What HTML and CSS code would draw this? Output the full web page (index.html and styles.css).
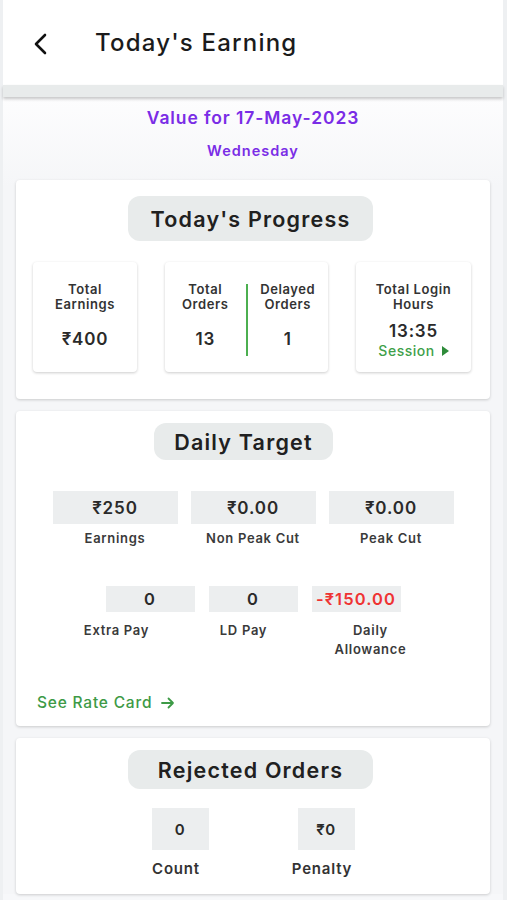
FILE: index.html
```html
<!DOCTYPE html>
<html lang="en">
<head>
<meta charset="utf-8">
<title>Today's Earning</title>
<link rel="stylesheet" href="styles.css">
</head>
<body>
<div class="app">
  <header class="topbar">
    <svg class="back" width="16" height="22" viewBox="0 0 16 22" aria-hidden="true"><path d="M13 2 L4 11 L13 20" fill="none" stroke="#111" stroke-width="2.6" stroke-linecap="round" stroke-linejoin="round"/></svg>
    <h1 class="title">Today's Earning</h1>
  </header>
  <div class="band"></div>
  <main class="content">
    <div class="date">Value for 17-May-2023</div>
    <div class="day">Wednesday</div>

    <section class="card progress">
      <div class="pill-row"><div class="pill pill-lg">Today's Progress</div></div>
      <div class="stats">
        <div class="stat stat-a">
          <div class="stat-label">Total<br>Earnings</div>
          <div class="stat-value">₹400</div>
        </div>
        <div class="stat stat-b">
          <div class="col">
            <div class="stat-label">Total<br>Orders</div>
            <div class="stat-value">13</div>
          </div>
          <div class="divider"></div>
          <div class="col">
            <div class="stat-label">Delayed<br>Orders</div>
            <div class="stat-value">1</div>
          </div>
        </div>
        <div class="stat stat-c">
          <div class="stat-label">Total Login<br>Hours</div>
          <div class="stat-time">13:35</div>
          <div class="session">Session <span class="tri"></span></div>
        </div>
      </div>
    </section>

    <section class="card target">
      <div class="pill-row pill-row-shift"><div class="pill pill-md">Daily Target</div></div>
      <div class="row1">
        <div class="item"><div class="vbox">₹250</div><div class="lbl">Earnings</div></div>
        <div class="item"><div class="vbox">₹0.00</div><div class="lbl">Non Peak Cut</div></div>
        <div class="item"><div class="vbox">₹0.00</div><div class="lbl">Peak Cut</div></div>
      </div>
      <div class="row2-boxes">
        <div class="vbox vbox-sm">0</div>
        <div class="vbox vbox-sm">0</div>
        <div class="vbox vbox-sm neg">-₹150.00</div>
      </div>
      <div class="row2-labels">
        <div class="lbl2">Extra Pay</div>
        <div class="lbl2">LD Pay</div>
        <div class="lbl2">Daily<br>Allowance</div>
      </div>
      <div class="rate">See Rate Card <svg class="arrow" width="14" height="12" viewBox="0 0 14 12" aria-hidden="true"><path d="M1 6 H12 M7.5 1.5 L12 6 L7.5 10.5" fill="none" stroke="#3d9a46" stroke-width="1.8" stroke-linecap="round" stroke-linejoin="round"/></svg></div>
    </section>

    <section class="card rejected">
      <div class="pill-row"><div class="pill pill-rj">Rejected Orders</div></div>
      <div class="rj-row">
        <div class="rj-item"><div class="rj-box">0</div><div class="rj-lbl">Count</div></div>
        <div class="rj-item"><div class="rj-box">₹0</div><div class="rj-lbl">Penalty</div></div>
      </div>
    </section>
  </main>
</div>
</body>
</html>
```

FILE: styles.css
```css
* { box-sizing: border-box; }
html, body { margin: 0; padding: 0; }
body {
  background: #eef0f2;
  font-family: "Inter", "Noto Sans", "DejaVu Sans", sans-serif;
  color: #2b2b2b;
}
.app {
  margin: 0 4px 0 3px;
  min-height: 900px;
  background: #f7f8fa;
}
.topbar {
  height: 85px;
  background: #ffffff;
  display: flex;
  align-items: center;
  padding-left: 29px;
}
.back { display: block; margin-top: 2px; }
.title {
  margin: 0 0 0 47px;
  font-size: 24px;
  font-weight: 500;
  color: #1b1b1b;
  letter-spacing: 1.2px;
}
.band {
  height: 12px;
  background: #e8ebeb;
  box-shadow: 0 2px 3px rgba(0,0,0,0.22);
  position: relative;
}
.content {
  padding: 10px 13px 0 13px;
  background: linear-gradient(#fdfdfe, #f5f6f8 90px);
}
.date {
  text-align: center;
  color: #7a2de6;
  font-size: 17.5px;
  line-height: 22px;
  font-weight: 600;
  letter-spacing: 0.9px;
}
.day {
  margin-top: 13px;
  text-align: center;
  color: #7a2de6;
  font-size: 14.5px;
  line-height: 18px;
  font-weight: 600;
  letter-spacing: 1px;
}
.card {
  background: #ffffff;
  border-radius: 4px;
  box-shadow: 0 1px 3px rgba(0,0,0,0.18);
}
.progress { margin-top: 20px; padding: 16px 0 27px 0; }
.target { margin-top: 12px; padding: 12px 0 13px 0; }
.rejected { margin-top: 12px; padding: 12px 0 15px 0; }

.pill-row { display: flex; justify-content: center; padding-right: 5px; }
.pill-row-shift { padding-right: 19px; }
.pill {
  background: #e8ebeb;
  border-radius: 12px;
  display: flex;
  align-items: center;
  justify-content: center;
  font-weight: 600;
  font-size: 21.5px;
  letter-spacing: 1.2px;
  color: #202020;
}
.pill-lg { width: 245px; height: 45px; }
.pill-md { width: 179px; height: 37px; }
.pill-rj { width: 245px; height: 39px; }

.stats {
  display: flex;
  gap: 28px;
  margin-top: 21px;
  padding-left: 17px;
}
.stat {
  height: 110px;
  background: #ffffff;
  border-radius: 4px;
  box-shadow: 0 1px 3px rgba(0,0,0,0.2);
  text-align: center;
  padding-top: 20px;
}
.stat-a { width: 104px; }
.stat-b { width: 163px; display: flex; padding-top: 0; }
.stat-c { width: 115px; }
.stat-b .col { flex: 1; padding-top: 20px; }
.stat-label {
  font-size: 13px;
  line-height: 15px;
  font-weight: 600;
  color: #333;
  letter-spacing: 0.6px;
}
.stat-value {
  margin-top: 16px;
  font-size: 17px;
  line-height: 22px;
  font-weight: 600;
  color: #2a2a2a;
  letter-spacing: 0.8px;
}
.divider {
  width: 2px;
  height: 72px;
  margin-top: 22px;
  background: #4caf50;
}
.stat-time {
  margin-top: 9px;
  font-size: 17px;
  line-height: 20px;
  font-weight: 600;
  color: #2a2a2a;
  letter-spacing: 0.8px;
}
.session {
  margin-top: 1px;
  font-size: 14px;
  line-height: 18px;
  font-weight: 500;
  color: #3f9f4a;
  letter-spacing: 0.5px;
  display: flex;
  align-items: center;
  justify-content: center;
  gap: 7px;
}
.tri {
  width: 0; height: 0;
  border-top: 5px solid transparent;
  border-bottom: 5px solid transparent;
  border-left: 7px solid #2e8b3a;
}

.row1 {
  display: flex;
  justify-content: center;
  gap: 13px;
  margin-top: 31px;
}
.item { width: 125px; text-align: center; }
.vbox {
  height: 33px;
  background: #eceeef;
  display: flex;
  align-items: center;
  justify-content: center;
  font-size: 17px;
  font-weight: 600;
  color: #2a2a2a;
  letter-spacing: 0.9px;
}
.lbl {
  margin-top: 6px;
  font-size: 13px;
  line-height: 16px;
  font-weight: 600;
  color: #3a3a3a;
  letter-spacing: 0.7px;
}
.row2-boxes {
  display: flex;
  justify-content: center;
  gap: 14px;
  margin-top: 40px;
}
.vbox-sm { width: 89px; height: 26px; font-size: 16.5px; }
.neg { color: #ef3333; letter-spacing: 1.1px; }
.row2-labels {
  display: flex;
  justify-content: center;
  padding-right: 19px;
  margin-top: 9px;
}
.lbl2 {
  width: 127px;
  text-align: center;
  font-size: 13px;
  line-height: 19px;
  font-weight: 600;
  color: #3a3a3a;
  letter-spacing: 0.7px;
}
.rate {
  margin-top: 34px;
  padding-left: 21px;
  font-size: 15.5px;
  line-height: 20px;
  font-weight: 500;
  color: #3d9a46;
  letter-spacing: 0.8px;
  display: flex;
  align-items: center;
  gap: 9px;
}

.rj-row {
  display: flex;
  justify-content: center;
  gap: 89px;
  margin-top: 19px;
}
.rj-item { width: 57px; display: flex; flex-direction: column; align-items: center; }
.rj-box {
  width: 57px;
  height: 42px;
  background: #eceeef;
  display: flex;
  align-items: center;
  justify-content: center;
  font-size: 15px;
  font-weight: 600;
  color: #2a2a2a;
  letter-spacing: 0.6px;
}
.rj-lbl {
  margin-top: 9px;
  font-size: 15px;
  line-height: 20px;
  font-weight: 600;
  color: #333;
  letter-spacing: 0.8px;
  white-space: nowrap;
  margin-left: -8px;
}
```
